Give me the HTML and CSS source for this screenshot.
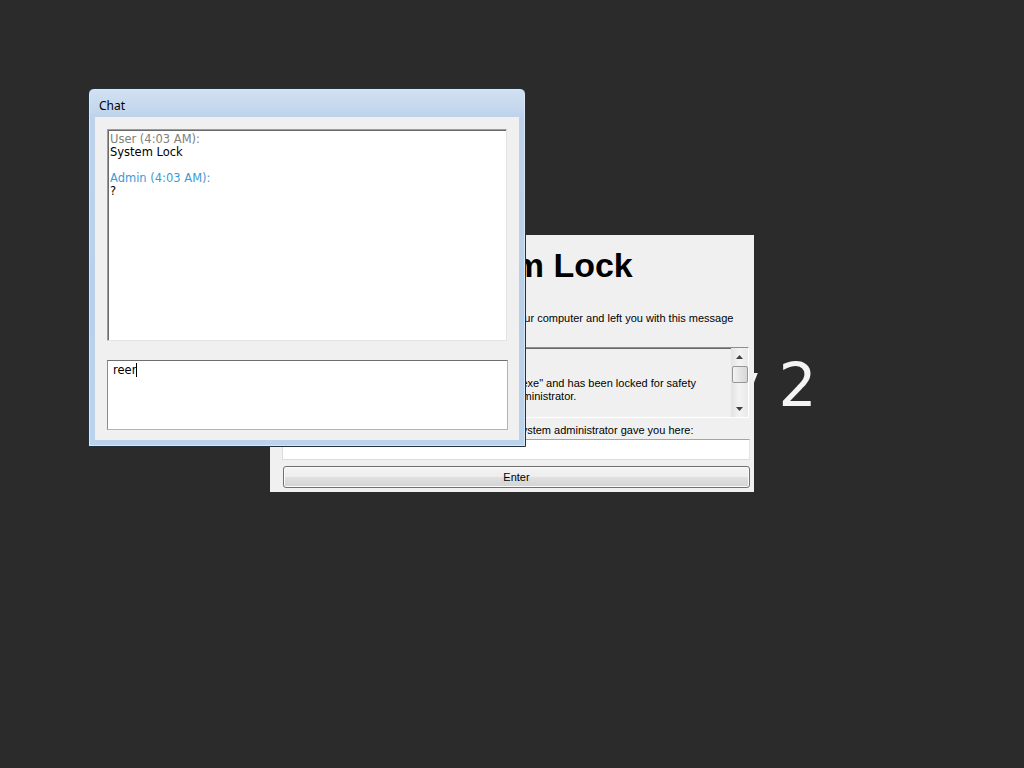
FILE: index.html
```html
<!DOCTYPE html>
<html>
<head>
<meta charset="utf-8">
<title>System Lock</title>
<link rel="stylesheet" href="styles.css">
</head>
<body>
<div class="desktop">
  <div class="desk-text">y 2</div>

  <div class="lock">
    <div class="lock-head">
      <svg class="lock-icon" width="48" height="40" viewBox="0 0 48 40">
        <rect x="10" y="16" width="28" height="22" rx="3" fill="#d8a81c" stroke="#8a6a10"/>
        <path d="M16 16 V10 a8 8 0 0 1 16 0 V16" fill="none" stroke="#8a8a8a" stroke-width="4"/>
      </svg>
      <h1 class="lock-title">System Lock</h1>
    </div>
    <p class="lock-desc">Your system administrator has remotely locked your computer and left you with this message</p>
    <div class="msgbox">
      <div class="msg-text">
        <div class="msg-line">Message from admin:</div>
        <div class="msg-line">&nbsp;</div>
        <div class="msg-line">Your computer was infected by "Trojan.Win32.A.exe" and has been locked for safety</div>
        <div class="msg-line">reasons. Please contact your network system administrator.</div>
      </div>
      <div class="scrollbar">
        <div class="sb-btn">
          <svg width="7" height="4" viewBox="0 0 7 4"><path d="M0 4 L3.5 0 L7 4 Z" fill="#404040"/></svg>
        </div>
        <div class="sb-track"><div class="sb-thumb"></div></div>
        <div class="sb-btn">
          <svg width="7" height="4" viewBox="0 0 7 4"><path d="M0 0 L7 0 L3.5 4 Z" fill="#404040"/></svg>
        </div>
      </div>
    </div>
    <div class="pw-label">Please, type in the unlock password which your system administrator gave you here:</div>
    <div class="pw-input"></div>
    <div class="btn">Enter</div>
  </div>

  <div class="chat">
    <div class="chat-title">Chat</div>
    <div class="chat-client">
      <div class="chat-log">
        <div class="log-line log-user">User (4:03 AM):</div>
        <div class="log-line">System Lock</div>
        <div class="log-line">&nbsp;</div>
        <div class="log-line log-admin">Admin (4:03 AM):</div>
        <div class="log-line">?</div>
      </div>
      <div class="chat-input">reer<span class="caret"></span></div>
    </div>
  </div>
</div>
</body>
</html>
```

FILE: styles.css
```css
html, body {
  margin: 0;
  padding: 0;
}

body {
  background: #2b2b2b;
  width: 1024px;
  height: 768px;
  overflow: hidden;
  font-family: "Liberation Sans", Arial, sans-serif;
}

.desktop {
  position: relative;
  width: 1024px;
  height: 768px;
}

.desk-text {
  position: absolute;
  left: 724px;
  top: 355px;
  font-family: "DejaVu Sans", sans-serif;
  font-size: 60px;
  line-height: 60px;
  color: #f4f4f4;
  white-space: nowrap;
}

/* ---------- Lock window ---------- */
.lock {
  position: absolute;
  left: 270px;
  top: 235px;
  width: 484px;
  height: 257px;
  box-sizing: border-box;
  padding: 10px 4px 0 12px;
  background: #f0f0f0;
  font-size: 11px;
  color: #000;
  display: flex;
  flex-direction: column;
}

.lock-head {
  display: flex;
  align-items: center;
  gap: 16px;
  padding-left: 77px;
  height: 40px;
}

.lock-title {
  margin: 0;
  font-size: 34px;
  line-height: 40px;
  font-weight: bold;
  white-space: nowrap;
}

.lock-desc {
  margin: 27px 0 0 0;
  line-height: 13px;
  white-space: nowrap;
}

.msgbox {
  margin-top: 22px;
  width: 467px;
  height: 71px;
  box-sizing: border-box;
  display: flex;
  border-top: 1px solid #8e8e8e;
  border-left: 1px solid #8e8e8e;
  border-right: 1px solid #ffffff;
  border-bottom: 1px solid #ffffff;
  box-shadow: inset 1px 1px 0 #6a6a6a;
  background: #f0f0f0;
}

.msg-text {
  flex: 1;
  padding: 3px 3px 0 3px;
  line-height: 13px;
  overflow: hidden;
  white-space: nowrap;
}

.scrollbar {
  width: 17px;
  display: flex;
  flex-direction: column;
  background: linear-gradient(to right, #e3e3e3, #f3f3f3 50%, #e9e9e9);
}

.sb-btn {
  height: 17px;
  display: flex;
  align-items: center;
  justify-content: center;
}

.sb-track {
  flex: 1;
  padding-top: 1px;
}

.sb-thumb {
  margin: 0 0 0 1px;
  width: 14px;
  height: 15px;
  border: 1px solid #979797;
  border-radius: 2px;
  background: linear-gradient(to right, #f2f2f2, #e4e4e4 50%, #d6d6d6);
}

.pw-label {
  margin-top: 6px;
  line-height: 13px;
  white-space: nowrap;
}

.pw-input {
  margin-top: 2px;
  width: 468px;
  height: 21px;
  box-sizing: border-box;
  background: #ffffff;
  border: 1px solid #dcdcdc;
  border-top-color: #a4a4a4;
  border-right-color: #e4e4e4;
}

.btn {
  margin: 6px 0 0 1px;
  width: 467px;
  height: 22px;
  box-sizing: border-box;
  border: 1px solid #707070;
  border-radius: 3px;
  background: linear-gradient(#f4f4f4 0%, #ededed 50%, #e0e0e0 50%, #d4d4d4 100%);
  box-shadow: inset 0 0 0 1px #fbfbfb;
  text-align: center;
  line-height: 20px;
  font-size: 11px;
}

/* ---------- Chat window ---------- */
.chat {
  position: absolute;
  left: 88px;
  top: 88px;
  width: 438px;
  height: 359px;
  box-sizing: border-box;
  border: 1px solid #22303e;
  border-radius: 6px 6px 0 0;
  padding: 0 6px 6px 6px;
  background: linear-gradient(#d2e1f2 0px, #bed3eb 28px, #b9d0ea 60%, #bcd3ec 100%);
  box-shadow: inset 0 0 0 1px #d9e6f4;
  display: flex;
  flex-direction: column;
}

.chat-title {
  height: 28px;
  box-sizing: border-box;
  padding: 4px 0 0 4px;
  display: flex;
  align-items: center;
  font-family: "Noto Sans", "Open Sans", sans-serif;
  font-size: 12px;
  color: #000;
}

.chat-client {
  flex: 1;
  box-sizing: border-box;
  background: #f0f0f0;
  padding: 12px 12px 10px 12px;
  display: flex;
  flex-direction: column;
  font-family: "DejaVu Sans", Verdana, sans-serif;
  font-size: 11.5px;
}

.chat-log {
  width: 400px;
  height: 212px;
  box-sizing: border-box;
  background: #ffffff;
  border-top: 1px solid #9c9c9c;
  border-left: 1px solid #9c9c9c;
  border-right: 1px solid #e3e3e3;
  border-bottom: 1px solid #e3e3e3;
  box-shadow: inset 1px 1px 0 #6a6a6a;
  padding: 3px 2px 2px 2px;
}

.log-line {
  line-height: 13px;
  white-space: nowrap;
  color: #000;
}

.log-user {
  color: #808080;
}

.log-admin {
  color: #3d9ad6;
}

.chat-input {
  margin-top: 19px;
  width: 401px;
  height: 70px;
  box-sizing: border-box;
  background: #ffffff;
  border: 1px solid #b4b4b4;
  border-top-color: #6e6e6e;
  border-left-color: #8c8c8c;
  padding: 2px 5px;
  line-height: 14px;
  color: #000;
}

.caret {
  display: inline-block;
  width: 0;
  height: 14px;
  border-left: 1px solid #000;
  vertical-align: -3px;
}
```
